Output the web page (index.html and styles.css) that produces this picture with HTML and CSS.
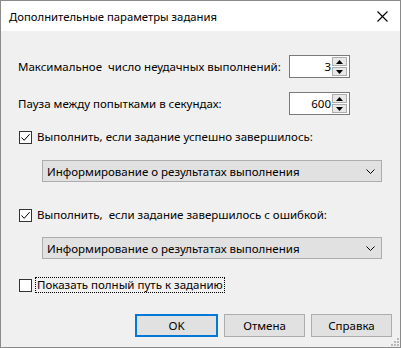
FILE: index.html
```html
<!DOCTYPE html>
<html lang="ru">
<head>
  <meta charset="UTF-8">
  <title>Дополнительные параметры задания</title>
  <link rel="stylesheet" href="styles.css">
</head>
<body>
  <div class="window">
    <div class="titlebar">
      <span class="title">Дополнительные параметры задания</span>
      <svg class="close" width="11" height="11" viewBox="0 0 11 11">
        <path d="M0.5 0.5 L10.5 10.5 M10.5 0.5 L0.5 10.5" stroke="#000" stroke-width="1.1" fill="none"/>
      </svg>
    </div>
    <div class="content">
      <div class="row row-first">
        <span class="label">Максимальное&nbsp; число неудачных выполнений:</span>
        <div class="spin">
          <span class="spin-value">3</span>
          <div class="spin-arrows">
            <div class="arrow"><svg width="7" height="4" viewBox="0 0 7 4"><path d="M3.5 0 L7 4 L0 4 Z" fill="#000"/></svg></div>
            <div class="arrow"><svg width="7" height="4" viewBox="0 0 7 4"><path d="M0 0 L7 0 L3.5 4 Z" fill="#000"/></svg></div>
          </div>
        </div>
      </div>
      <div class="row row-second">
        <span class="label">Пауза между попытками в секундах:</span>
        <div class="spin">
          <span class="spin-value">600</span>
          <div class="spin-arrows">
            <div class="arrow"><svg width="7" height="4" viewBox="0 0 7 4"><path d="M3.5 0 L7 4 L0 4 Z" fill="#000"/></svg></div>
            <div class="arrow"><svg width="7" height="4" viewBox="0 0 7 4"><path d="M0 0 L7 0 L3.5 4 Z" fill="#000"/></svg></div>
          </div>
        </div>
      </div>

      <div class="check check-one">
        <span class="box"><svg width="11" height="11" viewBox="0 0 11 11"><path d="M1.5 5.5 L4.2 8.3 L9.6 2.2" stroke="#000" stroke-width="1" fill="none"/></svg></span>
        <span class="check-text">Выполнить, если задание успешно завершилось:</span>
      </div>
      <div class="select select-one">
        <span class="select-text">Информирование о результатах выполнения</span>
        <svg width="9" height="5" viewBox="0 0 9 5"><path d="M0.5 0.5 L4.5 4.5 L8.5 0.5" stroke="#000" stroke-width="1" fill="none"/></svg>
      </div>

      <div class="check check-two">
        <span class="box"><svg width="11" height="11" viewBox="0 0 11 11"><path d="M1.5 5.5 L4.2 8.3 L9.6 2.2" stroke="#000" stroke-width="1" fill="none"/></svg></span>
        <span class="check-text">Выполнить,&nbsp; если задание завершилось с ошибкой:</span>
      </div>
      <div class="select select-two">
        <span class="select-text">Информирование о результатах выполнения</span>
        <svg width="9" height="5" viewBox="0 0 9 5"><path d="M0.5 0.5 L4.5 4.5 L8.5 0.5" stroke="#000" stroke-width="1" fill="none"/></svg>
      </div>

      <div class="check check-three">
        <span class="box"></span>
        <span class="check-text focused">Показать полный путь к заданию</span>
      </div>

      <div class="buttons">
        <button class="btn btn-default">OK</button>
        <button class="btn">Отмена</button>
        <button class="btn">Справка</button>
      </div>
    </div>
    <svg class="grip" width="8" height="8" viewBox="0 0 8 8">
      <rect x="6" y="0" width="2" height="2" fill="#b9b9b9"/>
      <rect x="3" y="3" width="2" height="2" fill="#b9b9b9"/>
      <rect x="6" y="3" width="2" height="2" fill="#b9b9b9"/>
      <rect x="0" y="6" width="2" height="2" fill="#b9b9b9"/>
      <rect x="3" y="6" width="2" height="2" fill="#b9b9b9"/>
      <rect x="6" y="6" width="2" height="2" fill="#b9b9b9"/>
    </svg>
  </div>
</body>
</html>
```

FILE: styles.css
```css
body {
  margin: 0;
  padding: 0;
  font-family: "Segoe UI", "Noto Sans", sans-serif;
  font-size: 11.5px;
  color: #000;
  background: #fff;
}
.window {
  position: relative;
  box-sizing: border-box;
  width: 401px;
  height: 348px;
  border: 1px solid #8a8a8a;
  background: #f0f0f0;
}
.titlebar {
  height: 30px;
  background: #fff;
  display: flex;
  align-items: center;
  justify-content: space-between;
  padding: 0 12px 0 8px;
}
.title {
  font-size: 11.3px;
  margin-top: 1px;
}
.content {
  padding: 0 18px 0 17px;
}
.row {
  display: flex;
  align-items: center;
  height: 23px;
  padding-right: 32px;
}
.row-first { margin-top: 24px; }
.row-second { margin-top: 14px; }
.label {
  flex: 1;
  white-space: nowrap;
}
.spin {
  box-sizing: border-box;
  width: 61px;
  height: 23px;
  border: 1px solid #7a7a7a;
  background: #fff;
  display: flex;
  align-items: center;
  padding: 1px 2px;
}
.spin-value {
  flex: 1;
  text-align: right;
  padding-right: 1px;
}
.spin-arrows {
  display: flex;
  flex-direction: column;
  gap: 1px;
  width: 15px;
}
.arrow {
  box-sizing: border-box;
  height: 9px;
  border: 1px solid #adadad;
  background: #e8e8e8;
  display: flex;
  align-items: center;
  justify-content: center;
}
.check {
  display: flex;
  align-items: center;
  height: 18px;
}
.check-one { margin-top: 13px; }
.check-two { margin-top: 24px; }
.check-three { margin-top: 17px; }
.box {
  box-sizing: border-box;
  width: 13px;
  height: 13px;
  border: 1px solid #333;
  background: #fff;
  display: flex;
  align-items: center;
  justify-content: center;
  margin-left: 1px;
  margin-right: 3px;
}
.check-text {
  padding: 0 1px;
  line-height: 14px;
  border: 1px dotted transparent;
}
.focused {
  border-color: #000;
}
.select {
  box-sizing: border-box;
  margin-left: 24px;
  height: 22px;
  border: 1px solid #adadad;
  background: #e1e1e1;
  display: flex;
  align-items: center;
  justify-content: space-between;
  padding: 0 6px 0 4px;
}
.select-one { margin-top: 14px; }
.select-two { margin-top: 13px; }
.buttons {
  margin-top: 20px;
  display: flex;
  justify-content: flex-end;
  gap: 6px;
  margin-right: -10px;
}
.btn {
  box-sizing: border-box;
  width: 81px;
  height: 23px;
  border: 1px solid #adadad;
  background: #e1e1e1;
  font-family: inherit;
  font-size: 11.5px;
  color: #000;
  padding: 0;
}
.btn-default {
  border: 2px solid #0078d7;
  width: 83px;
}
.grip {
  position: absolute;
  right: 1px;
  bottom: 1px;
}
```
